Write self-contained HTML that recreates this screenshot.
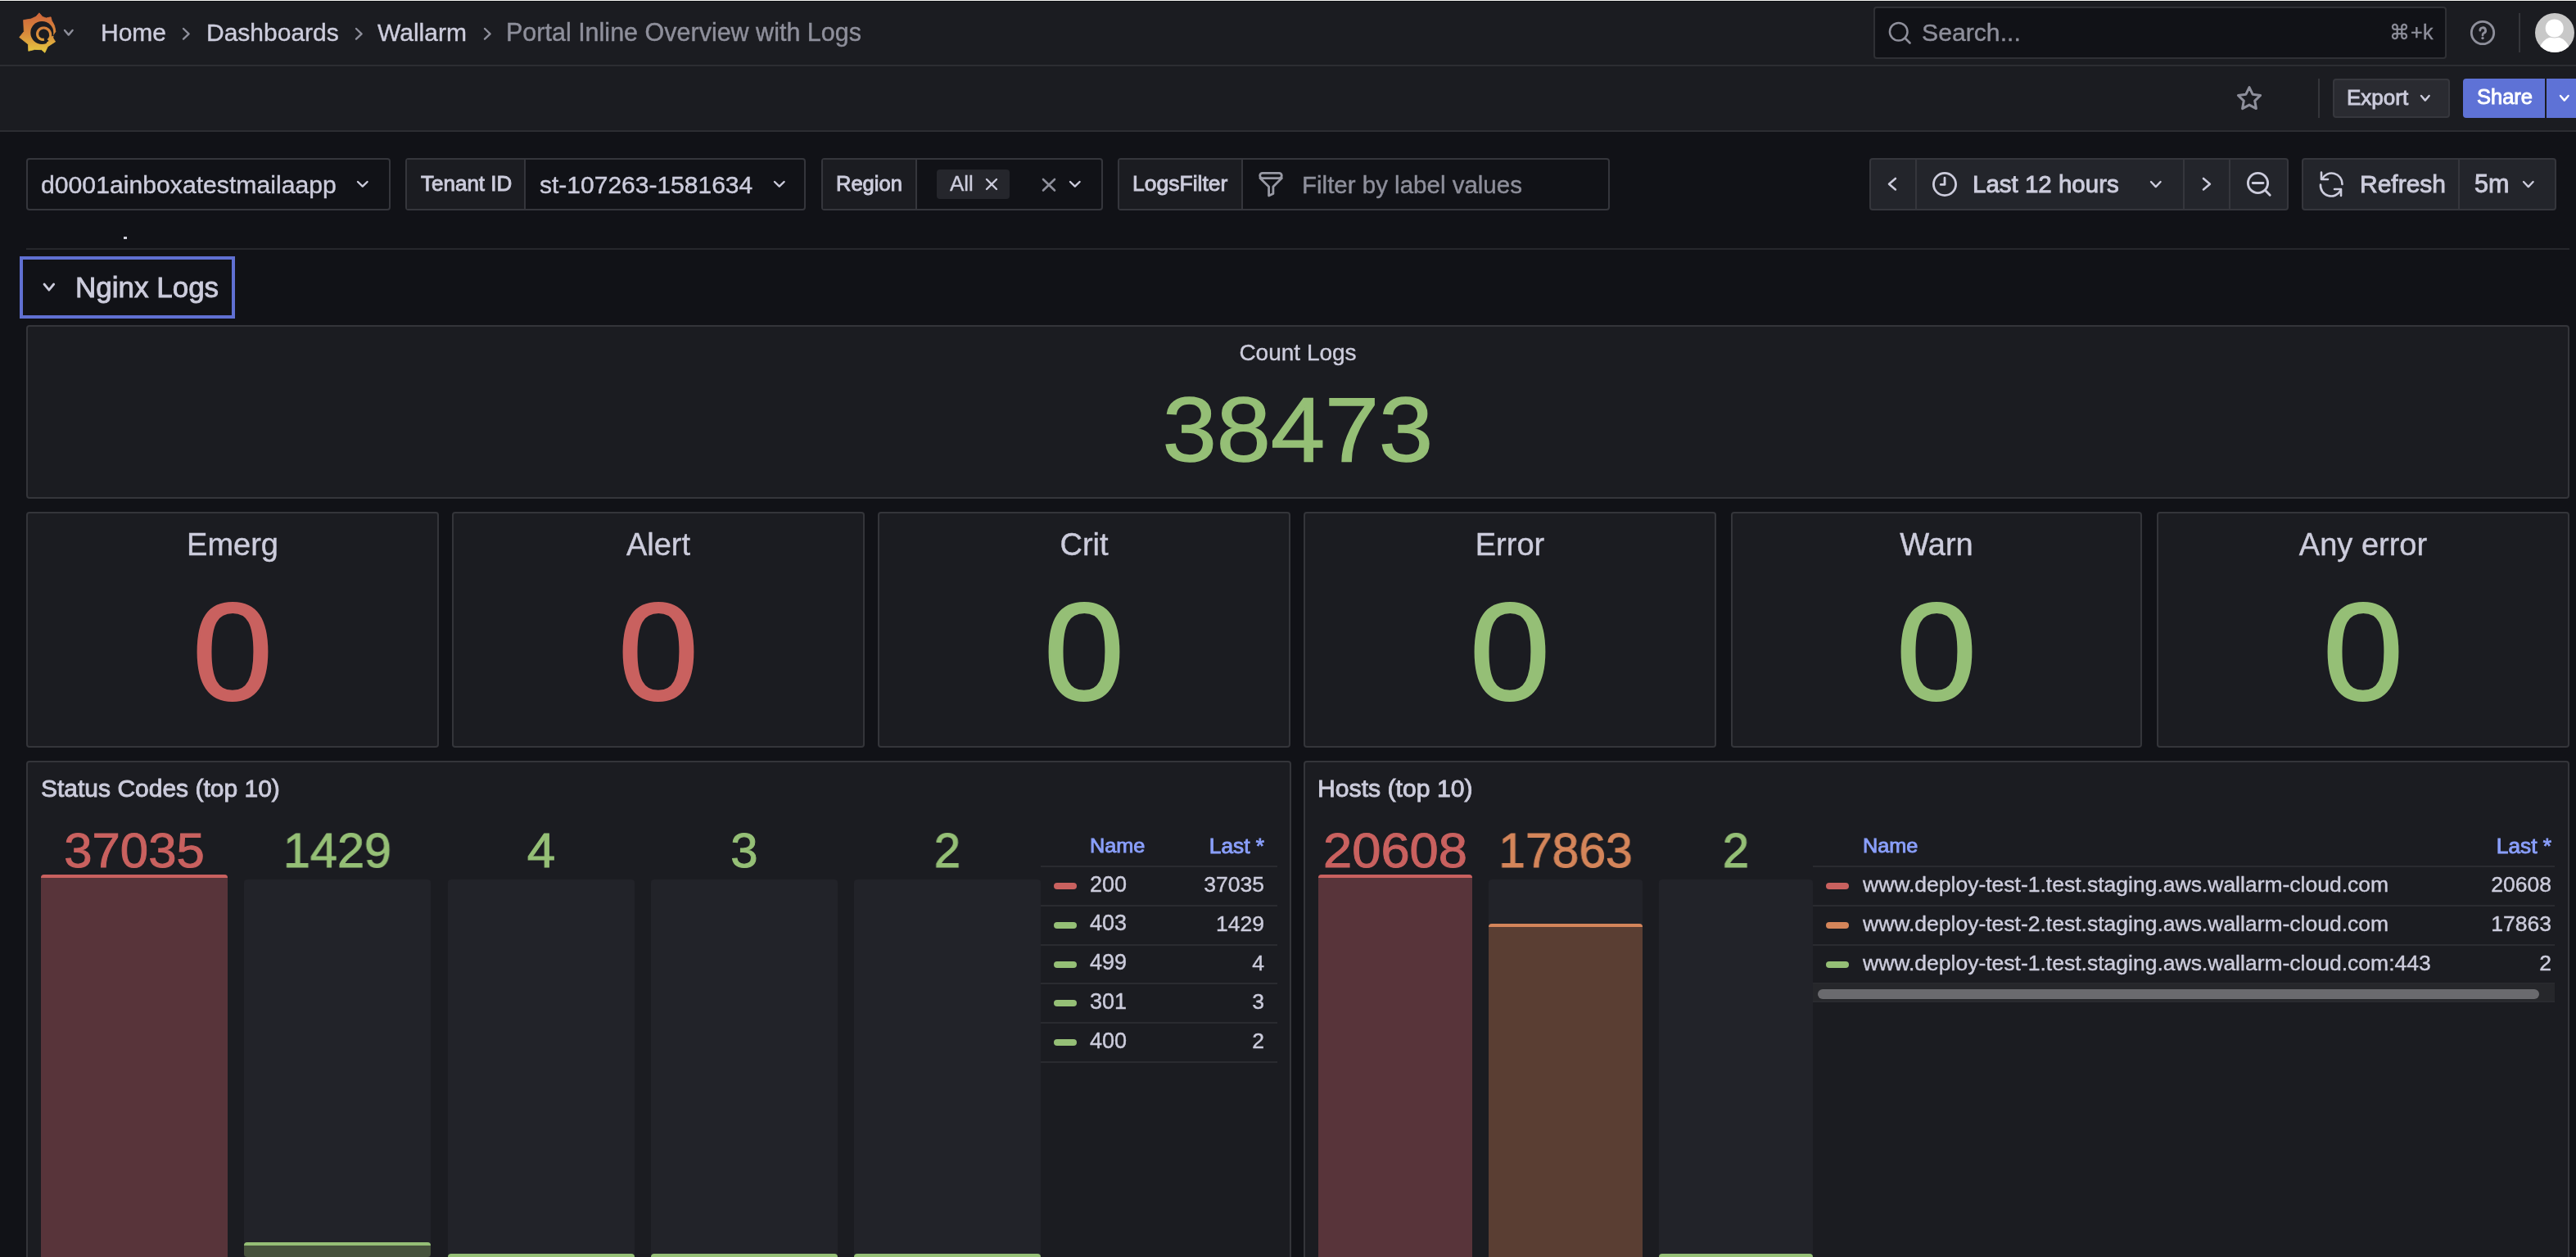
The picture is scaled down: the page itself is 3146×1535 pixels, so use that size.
<!DOCTYPE html>
<html><head><meta charset="utf-8">
<style>
*{box-sizing:border-box;margin:0;padding:0}
html,body{width:3146px;height:1535px;overflow:hidden;background:#111217;font-family:"Liberation Sans",sans-serif;color:#ccccdc}
.a{position:absolute}
.t{position:absolute;white-space:nowrap;line-height:1;will-change:transform}
svg{position:absolute;overflow:visible}
</style></head><body>
<div class="a" style="left:0px;top:0px;width:3146px;height:161px;background:#1b1c21;"></div>
<div class="a" style="left:0px;top:0px;width:3146px;height:1px;background:#f4f4f2;"></div>
<div class="a" style="left:0px;top:1px;width:3146px;height:1px;background:#0e0f13;"></div>
<div class="a" style="left:0px;top:79px;width:3146px;height:2px;background:#2c2d32;"></div>
<div class="a" style="left:0px;top:159px;width:3146px;height:2px;background:#2c2d32;"></div>
<svg style="left:14px;top:8px" width="86" height="64" viewBox="0 0 86 64"><defs><linearGradient id="lg" gradientUnits="userSpaceOnUse" x1="0" y1="10" x2="0" y2="56"><stop offset="0" stop-color="#cf683b"/><stop offset="0.5" stop-color="#d98a3b"/><stop offset="1" stop-color="#e5c840"/></linearGradient></defs><path fill="url(#lg)" stroke="url(#lg)" stroke-width="0.8" stroke-linejoin="round" d="M30.00 12.20 L33.90 7.80 L37.90 12.40 L42.30 14.00 L48.10 12.80 L49.30 17.40 Q53.40 22.50 53.90 30.60 L50.40 35.60 L51.00 38.70 L53.60 42.90 L44.30 48.90 L40.80 56.30 L36.70 52.70 L28.50 52.40 L20.80 54.30 L20.40 46.10 L9.70 37.50 L15.30 30.50 L14.60 16.60 L23.90 15.10 Z"/><circle cx="37.3" cy="32.0" r="14.0" fill="#1b1c21"/><path d="M39.88 40.11 L39.44 40.21 L38.99 40.27 L38.54 40.31 L38.08 40.31 L37.62 40.28 L37.16 40.22 L36.71 40.12 L36.26 39.99 L35.81 39.83 L35.38 39.63 L34.96 39.40 L34.56 39.14 L34.18 38.85 L33.81 38.53 L33.47 38.19 L33.15 37.81 L32.85 37.42 L32.59 37.00 L32.35 36.56 L32.15 36.10 L31.98 35.62 L31.84 35.13 L31.74 34.63 L31.67 34.12 L31.64 33.61 L31.65 33.09 L31.70 32.57 L31.78 32.05 L31.90 31.54 L32.06 31.04 L32.26 30.54 L32.49 30.06 L32.76 29.59 L33.06 29.14 L33.40 28.72 L33.77 28.31 L34.17 27.94 L34.59 27.59 L35.05 27.27 L35.53 26.98 L36.03 26.73 L36.55 26.51 L37.08 26.33 L37.63 26.19 L38.19 26.08 L38.77 26.02 L39.34 26.00 L39.92 26.02 L40.50 26.09 L41.08 26.19 L41.65 26.34 L42.21 26.53 L42.75 26.76 L43.28 27.03 L43.80 27.34 L44.29 27.69 L44.76 28.07 L45.20 28.49 L45.61 28.94 L45.99 29.42 L46.33 29.93 L46.64 30.47 L46.91 31.03 L47.14 31.61 L47.33 32.21 L47.47 32.82 L47.57 33.44 L47.63 34.08 L47.64 34.72 L47.60 35.35 L47.52 35.99 L47.39 36.63 L47.22 37.25 L47.00 37.87 L46.73 38.46 L46.42 39.04 L46.07 39.60 L45.68 40.14 L45.24 40.64 L44.77 41.12" fill="none" stroke="url(#lg)" stroke-width="3.2"/><path fill="url(#lg)" d="M48.43 36.58 L48.21 37.42 L47.92 38.25 L47.55 39.05 L47.12 39.82 L46.61 40.56 L46.05 41.25 L45.42 41.89 L44.73 42.47 L43.99 43.00 L43.21 43.46 L42.36 45.91 L43.67 45.36 L44.92 44.69 L46.10 43.90 L47.20 43.00 L48.21 42.00 L49.12 40.91 L49.92 39.73 L50.60 38.49 L51.16 37.18 L51.60 35.83 Z"/></svg>
<svg style="left:73.2px;top:31.200000000000003px" width="21.599999999999994" height="17.599999999999994" viewBox="0 0 21.599999999999994 17.599999999999994"><path d="M6.00 6.00 L10.80 11.60 L15.60 6.00" fill="none" stroke="#8e8f9b" stroke-width="2.4" stroke-linecap="round" stroke-linejoin="round"/></svg>
<div class="t" style="top:24.61px;font-size:30px;color:#ccccdc;-webkit-text-stroke:0.4px #ccccdc;left:123px;">Home</div>
<svg style="left:218.2px;top:29.200000000000003px" width="18.600000000000023" height="24.599999999999994" viewBox="0 0 18.600000000000023 24.599999999999994"><path d="M6.00 6.00 L12.60 12.30 L6.00 18.60" fill="none" stroke="#8e8f9b" stroke-width="2.4" stroke-linecap="round" stroke-linejoin="round"/></svg>
<div class="t" style="top:24.61px;font-size:30px;color:#ccccdc;-webkit-text-stroke:0.4px #ccccdc;left:252px;">Dashboards</div>
<svg style="left:429.2px;top:29.200000000000003px" width="18.600000000000023" height="24.599999999999994" viewBox="0 0 18.600000000000023 24.599999999999994"><path d="M6.00 6.00 L12.60 12.30 L6.00 18.60" fill="none" stroke="#8e8f9b" stroke-width="2.4" stroke-linecap="round" stroke-linejoin="round"/></svg>
<div class="t" style="top:24.61px;font-size:30px;color:#ccccdc;-webkit-text-stroke:0.4px #ccccdc;left:461px;">Wallarm</div>
<svg style="left:586.2px;top:29.200000000000003px" width="18.59999999999991" height="24.599999999999994" viewBox="0 0 18.59999999999991 24.599999999999994"><path d="M6.00 6.00 L12.60 12.30 L6.00 18.60" fill="none" stroke="#8e8f9b" stroke-width="2.4" stroke-linecap="round" stroke-linejoin="round"/></svg>
<div class="t" style="top:24.18px;font-size:30.5px;color:#8e8f9b;-webkit-text-stroke:0.4px #8e8f9b;left:618px;">Portal Inline Overview with Logs</div>
<div class="a" style="left:2288px;top:8px;width:700px;height:64px;background:#111217;border:2px solid #2f3035;border-radius:4px;"></div>
<svg style="left:2304px;top:24px" width="34" height="34" viewBox="0 0 34 34"><circle cx="14.7" cy="14.8" r="10.8" fill="none" stroke="#8e8f9b" stroke-width="2.5"/><path d="M22.5 22.5 L28.5 28.5" fill="none" stroke="#8e8f9b" stroke-width="2.6" stroke-linecap="round" stroke-linejoin="round"/></svg>
<div class="t" style="top:24.74px;font-size:30.2px;color:#8e8f9b;-webkit-text-stroke:0.4px #8e8f9b;left:2346.5px;">Search...</div>
<div class="t" style="top:26.84px;font-size:25px;color:#8e8f9b;letter-spacing:0.5px;-webkit-text-stroke:0.4px #8e8f9b;left:972px;width:2000px;text-align:right;">&#8984;+k</div>
<svg style="left:3014px;top:22px" width="36" height="36" viewBox="0 0 36 36"><circle cx="18" cy="18" r="13.7" fill="none" stroke="#8e8f9b" stroke-width="2.8"/><path d="M14.8 15.2 A3.4 3.4 0 1 1 19.2 18.4 Q18 19 18 21" fill="none" stroke="#8e8f9b" stroke-width="2.8" stroke-linecap="round" stroke-linejoin="round"/><circle cx="18" cy="24.6" r="1.7" fill="#8e8f9b"/></svg>
<div class="a" style="left:3076px;top:16px;width:2px;height:48px;background:#34353a;"></div>
<svg style="left:3096px;top:16px" width="48" height="48" viewBox="0 0 48 48"><circle cx="24" cy="24" r="24" fill="#c8c8c8"/>
<clipPath id="av"><circle cx="24" cy="24" r="24"/></clipPath><g clip-path="url(#av)"><ellipse cx="23.7" cy="46.5" rx="18.5" ry="17.5" fill="#ffffff"/><circle cx="23.7" cy="18.4" r="12.2" fill="#c8c8c8"/><circle cx="23.7" cy="18.4" r="11" fill="#ffffff"/></g></svg>
<svg style="left:2728px;top:102px" width="38" height="36" viewBox="0 0 38 36"><path d="M19 4.6 L23.1 13.2 L32.6 14.5 L25.7 21.1 L27.4 30.6 L19 26.1 L10.6 30.6 L12.3 21.1 L5.4 14.5 L14.9 13.2 Z" fill="none" stroke="#8e8f9b" stroke-width="3.0" stroke-linecap="round" stroke-linejoin="round"/></svg>
<div class="a" style="left:2831px;top:96px;width:2px;height:48px;background:#34353a;"></div>
<div class="a" style="left:2849px;top:96px;width:143px;height:48px;background:#2a2b31;border:2px solid #36373d;border-radius:4px;"></div>
<div class="t" style="top:105.99px;font-size:26px;color:#ccccdc;-webkit-text-stroke:0.9px #ccccdc;left:2866px;">Export</div>
<svg style="left:2951.2px;top:111.2px" width="21.600000000000364" height="17.599999999999994" viewBox="0 0 21.600000000000364 17.599999999999994"><path d="M6.00 6.00 L10.80 11.60 L15.60 6.00" fill="none" stroke="#ccccdc" stroke-width="2.4" stroke-linecap="round" stroke-linejoin="round"/></svg>
<div class="a" style="left:3008px;top:96px;width:100px;height:48px;background:#5e72d6;border-radius:4px 0 0 4px"></div>
<div class="t" style="top:106.41px;font-size:25.5px;color:#ffffff;-webkit-text-stroke:0.9px #ffffff;left:3024.5px;">Share</div>
<div class="a" style="left:3110px;top:96px;width:40px;height:48px;background:#5e72d6;"></div>
<svg style="left:3121.2px;top:111.2px" width="21.600000000000364" height="17.599999999999994" viewBox="0 0 21.600000000000364 17.599999999999994"><path d="M6.00 6.00 L10.80 11.60 L15.60 6.00" fill="none" stroke="#ffffff" stroke-width="2.4" stroke-linecap="round" stroke-linejoin="round"/></svg>
<div class="a" style="left:32px;top:193px;width:445px;height:64px;background:#111217;border:2px solid #35363c;border-radius:4px;"></div>
<div class="t" style="top:210.74px;font-size:30.2px;color:#ccccdc;-webkit-text-stroke:0.4px #ccccdc;left:50px;">d0001ainboxatestmailaapp</div>
<svg style="left:431.2px;top:216.2px" width="23.600000000000023" height="17.600000000000023" viewBox="0 0 23.600000000000023 17.600000000000023"><path d="M6.00 6.00 L11.80 11.60 L17.60 6.00" fill="none" stroke="#ccccdc" stroke-width="2.4" stroke-linecap="round" stroke-linejoin="round"/></svg>
<div class="a" style="left:495px;top:193px;width:489px;height:64px;background:#111217;border:2px solid #35363c;border-radius:4px;"></div>
<div class="a" style="left:497px;top:195px;width:143px;height:60px;background:#1b1c21;"></div>
<div class="a" style="left:640px;top:195px;width:2px;height:60px;background:#35363c;"></div>
<div class="t" style="top:211.49px;font-size:26px;color:#ccccdc;-webkit-text-stroke:0.9px #ccccdc;left:514px;">Tenant ID</div>
<div class="t" style="top:210.91px;font-size:30px;color:#ccccdc;-webkit-text-stroke:0.4px #ccccdc;left:659px;">st-107263-1581634</div>
<svg style="left:939.7px;top:216.2px" width="23.59999999999991" height="17.600000000000023" viewBox="0 0 23.59999999999991 17.600000000000023"><path d="M6.00 6.00 L11.80 11.60 L17.60 6.00" fill="none" stroke="#ccccdc" stroke-width="2.4" stroke-linecap="round" stroke-linejoin="round"/></svg>
<div class="a" style="left:1003px;top:193px;width:344px;height:64px;background:#111217;border:2px solid #35363c;border-radius:4px;"></div>
<div class="a" style="left:1005px;top:195px;width:113px;height:60px;background:#1b1c21;"></div>
<div class="a" style="left:1118px;top:195px;width:2px;height:60px;background:#35363c;"></div>
<div class="t" style="top:211.91px;font-size:25.5px;color:#ccccdc;-webkit-text-stroke:0.9px #ccccdc;left:1020.5px;">Region</div>
<div class="a" style="left:1144px;top:207px;width:89px;height:36px;background:#25262c;border-radius:4px;"></div>
<div class="t" style="top:211.49px;font-size:26px;color:#ccccdc;-webkit-text-stroke:0.3px #ccccdc;left:1160px;">All</div>
<svg style="left:1199px;top:213px" width="24" height="24" viewBox="0 0 24 24"><path d="M6.00 6.00 L18.00 18.00" fill="none" stroke="#ccccdc" stroke-width="2.4" stroke-linecap="round" stroke-linejoin="round"/><path d="M18.00 6.00 L6.00 18.00" fill="none" stroke="#ccccdc" stroke-width="2.4" stroke-linecap="round" stroke-linejoin="round"/></svg>
<svg style="left:1268px;top:212.5px" width="26" height="25.5" viewBox="0 0 26 25.5"><path d="M6.00 6.00 L20.00 19.50" fill="none" stroke="#8e8f9b" stroke-width="2.6" stroke-linecap="round" stroke-linejoin="round"/><path d="M20.00 6.00 L6.00 19.50" fill="none" stroke="#8e8f9b" stroke-width="2.6" stroke-linecap="round" stroke-linejoin="round"/></svg>
<svg style="left:1301.2px;top:216.2px" width="23.59999999999991" height="17.600000000000023" viewBox="0 0 23.59999999999991 17.600000000000023"><path d="M6.00 6.00 L11.80 11.60 L17.60 6.00" fill="none" stroke="#ccccdc" stroke-width="2.4" stroke-linecap="round" stroke-linejoin="round"/></svg>
<div class="a" style="left:1365px;top:193px;width:601px;height:64px;background:#111217;border:2px solid #35363c;border-radius:4px;"></div>
<div class="a" style="left:1367px;top:195px;width:149px;height:60px;background:#1b1c21;"></div>
<div class="a" style="left:1516px;top:195px;width:2px;height:60px;background:#35363c;"></div>
<div class="t" style="top:211.07px;font-size:26.5px;color:#ccccdc;-webkit-text-stroke:0.9px #ccccdc;left:1383px;">LogsFilter</div>
<svg style="left:1530px;top:204px" width="44" height="44" viewBox="0 0 44 44"><rect x="8.7" y="7.4" width="26.6" height="6.2" rx="3.1" fill="none" stroke="#9899a4" stroke-width="2.8"/><path d="M8.9 13.6 L19.6 24 L19.6 35 L24.9 32.4 L24.9 24 L35.4 13.6" fill="none" stroke="#9899a4" stroke-width="2.8" stroke-linecap="round" stroke-linejoin="round"/></svg>
<div class="t" style="top:211.33px;font-size:29.5px;color:#8e8f9b;-webkit-text-stroke:0.4px #8e8f9b;left:1590px;">Filter by label values</div>
<div class="a" style="left:2283px;top:193px;width:512px;height:64px;background:#23252b;border:2px solid #35363c;border-radius:4px;"></div>
<div class="a" style="left:2339px;top:195px;width:2px;height:60px;background:#35363c;"></div>
<div class="a" style="left:2666px;top:195px;width:2px;height:60px;background:#35363c;"></div>
<div class="a" style="left:2722px;top:195px;width:2px;height:60px;background:#35363c;"></div>
<svg style="left:2301.3px;top:212.3px" width="19.899999999999636" height="25.399999999999977" viewBox="0 0 19.899999999999636 25.399999999999977"><path d="M13.90 6.00 L6.00 12.70 L13.90 19.40" fill="none" stroke="#ccccdc" stroke-width="2.6" stroke-linecap="round" stroke-linejoin="round"/></svg>
<svg style="left:2357px;top:207px" width="36" height="36" viewBox="0 0 36 36"><circle cx="18" cy="18" r="13.6" fill="none" stroke="#ccccdc" stroke-width="2.8"/><path d="M18 10.2 L18 18.4 L13.2 18.4" fill="none" stroke="#ccccdc" stroke-width="2.8" stroke-linecap="round" stroke-linejoin="round"/></svg>
<div class="t" style="top:209.83px;font-size:29.5px;color:#ccccdc;-webkit-text-stroke:0.9px #ccccdc;left:2409px;">Last 12 hours</div>
<svg style="left:2621.2px;top:216.2px" width="23.600000000000364" height="18.100000000000023" viewBox="0 0 23.600000000000364 18.100000000000023"><path d="M6.00 6.00 L11.80 12.10 L17.60 6.00" fill="none" stroke="#ccccdc" stroke-width="2.4" stroke-linecap="round" stroke-linejoin="round"/></svg>
<svg style="left:2685.3px;top:212.3px" width="19.899999999999636" height="25.399999999999977" viewBox="0 0 19.899999999999636 25.399999999999977"><path d="M6.00 6.00 L13.90 12.70 L6.00 19.40" fill="none" stroke="#ccccdc" stroke-width="2.6" stroke-linecap="round" stroke-linejoin="round"/></svg>
<svg style="left:2741px;top:206px" width="36" height="36" viewBox="0 0 36 36"><circle cx="16.5" cy="17.5" r="12.1" fill="none" stroke="#ccccdc" stroke-width="2.9"/><path d="M10.2 17.5 L23 17.5 M25.3 26.3 L31.2 32.2" fill="none" stroke="#ccccdc" stroke-width="2.9" stroke-linecap="round" stroke-linejoin="round"/></svg>
<div class="a" style="left:2811px;top:193px;width:311px;height:64px;background:#23252b;border:2px solid #35363c;border-radius:4px;"></div>
<div class="a" style="left:3002px;top:195px;width:2px;height:60px;background:#35363c;"></div>
<svg style="left:2829px;top:207px" width="36" height="36" viewBox="0 0 36 36"><path d="M31.5 18 A13 13 0 0 0 7 11.5" fill="none" stroke="#ccccdc" stroke-width="2.6" stroke-linecap="round" stroke-linejoin="round"/><path d="M5 18.5 A13 13 0 0 0 29.5 25.5" fill="none" stroke="#ccccdc" stroke-width="2.6" stroke-linecap="round" stroke-linejoin="round"/><path d="M6 3.5 L6 12 L14 12" fill="none" stroke="#ccccdc" stroke-width="2.6" stroke-linecap="round" stroke-linejoin="round"/><path d="M30 32 L30 24 L22 24" fill="none" stroke="#ccccdc" stroke-width="2.6" stroke-linecap="round" stroke-linejoin="round"/></svg>
<div class="t" style="top:209.60px;font-size:30px;color:#ccccdc;-webkit-text-stroke:0.9px #ccccdc;left:2882px;">Refresh</div>
<div class="t" style="top:209.18px;font-size:30.5px;color:#ccccdc;-webkit-text-stroke:0.9px #ccccdc;left:3022px;">5m</div>
<svg style="left:3076.2px;top:216.2px" width="23.600000000000364" height="18.100000000000023" viewBox="0 0 23.600000000000364 18.100000000000023"><path d="M6.00 6.00 L11.80 12.10 L17.60 6.00" fill="none" stroke="#ccccdc" stroke-width="2.4" stroke-linecap="round" stroke-linejoin="round"/></svg>
<div class="a" style="left:151px;top:289px;width:4px;height:3px;background:#d0d0da;"></div>
<div class="a" style="left:32px;top:303px;width:3106px;height:2px;background:#26272c;"></div>
<div class="a" style="left:24px;top:313px;width:263px;height:76px;border:4px solid #6070d2;"></div>
<svg style="left:48.4px;top:341.4px" width="23.699999999999996" height="19.200000000000045" viewBox="0 0 23.699999999999996 19.200000000000045"><path d="M6.00 6.00 L11.85 13.20 L17.70 6.00" fill="none" stroke="#ccccdc" stroke-width="2.8" stroke-linecap="round" stroke-linejoin="round"/></svg>
<div class="t" style="top:333.07px;font-size:35px;color:#ccccdc;-webkit-text-stroke:0.9px #ccccdc;left:91.5px;">Nginx Logs</div>
<div class="a" style="left:32px;top:397px;width:3106px;height:212px;background:#1b1c21;border:2px solid #34353a;border-radius:4px;"></div>
<div class="t" style="top:417.30px;font-size:28px;color:#ccccdc;-webkit-text-stroke:0.4px #ccccdc;left:585px;width:2000px;text-align:center;">Count Logs</div>
<div class="t" style="top:468.69px;font-size:112px;color:#95bf76;-webkit-text-stroke:1.5px #95bf76;left:585px;width:2000px;text-align:center;transform:scaleX(1.061);transform-origin:center 0;">38473</div>
<div class="a" style="left:32px;top:625px;width:504px;height:288px;background:#1b1c21;border:2px solid #34353a;border-radius:4px;"></div>
<div class="t" style="top:645.83px;font-size:38px;color:#ccccdc;-webkit-text-stroke:0.4px #ccccdc;left:-716.0px;width:2000px;text-align:center;">Emerg</div>
<div class="t" style="top:711.79px;font-size:168px;color:#c9615f;-webkit-text-stroke:2px #c9615f;left:-716.0px;width:2000px;text-align:center;transform:scaleX(1.054);transform-origin:center 0;">0</div>
<div class="a" style="left:552px;top:625px;width:504px;height:288px;background:#1b1c21;border:2px solid #34353a;border-radius:4px;"></div>
<div class="t" style="top:645.83px;font-size:38px;color:#ccccdc;-webkit-text-stroke:0.4px #ccccdc;left:-196.0px;width:2000px;text-align:center;">Alert</div>
<div class="t" style="top:711.79px;font-size:168px;color:#c9615f;-webkit-text-stroke:2px #c9615f;left:-196.0px;width:2000px;text-align:center;transform:scaleX(1.054);transform-origin:center 0;">0</div>
<div class="a" style="left:1072px;top:625px;width:504px;height:288px;background:#1b1c21;border:2px solid #34353a;border-radius:4px;"></div>
<div class="t" style="top:645.83px;font-size:38px;color:#ccccdc;-webkit-text-stroke:0.4px #ccccdc;left:324.0px;width:2000px;text-align:center;">Crit</div>
<div class="t" style="top:711.79px;font-size:168px;color:#95bf76;-webkit-text-stroke:2px #95bf76;left:324.0px;width:2000px;text-align:center;transform:scaleX(1.054);transform-origin:center 0;">0</div>
<div class="a" style="left:1592px;top:625px;width:504px;height:288px;background:#1b1c21;border:2px solid #34353a;border-radius:4px;"></div>
<div class="t" style="top:645.83px;font-size:38px;color:#ccccdc;-webkit-text-stroke:0.4px #ccccdc;left:844.0px;width:2000px;text-align:center;">Error</div>
<div class="t" style="top:711.79px;font-size:168px;color:#95bf76;-webkit-text-stroke:2px #95bf76;left:844.0px;width:2000px;text-align:center;transform:scaleX(1.054);transform-origin:center 0;">0</div>
<div class="a" style="left:2114px;top:625px;width:502px;height:288px;background:#1b1c21;border:2px solid #34353a;border-radius:4px;"></div>
<div class="t" style="top:645.83px;font-size:38px;color:#ccccdc;-webkit-text-stroke:0.4px #ccccdc;left:1365.0px;width:2000px;text-align:center;">Warn</div>
<div class="t" style="top:711.79px;font-size:168px;color:#95bf76;-webkit-text-stroke:2px #95bf76;left:1365.0px;width:2000px;text-align:center;transform:scaleX(1.054);transform-origin:center 0;">0</div>
<div class="a" style="left:2634px;top:625px;width:504px;height:288px;background:#1b1c21;border:2px solid #34353a;border-radius:4px;"></div>
<div class="t" style="top:645.83px;font-size:38px;color:#ccccdc;-webkit-text-stroke:0.4px #ccccdc;left:1886.0px;width:2000px;text-align:center;">Any error</div>
<div class="t" style="top:711.79px;font-size:168px;color:#95bf76;-webkit-text-stroke:2px #95bf76;left:1886.0px;width:2000px;text-align:center;transform:scaleX(1.054);transform-origin:center 0;">0</div>
<div class="a" style="left:32px;top:929px;width:1545px;height:640px;background:#1b1c21;border:2px solid #34353a;border-radius:4px;"></div>
<div class="t" style="top:948.11px;font-size:30px;color:#ccccdc;-webkit-text-stroke:0.9px #ccccdc;left:50px;">Status Codes (top 10)</div>
<div class="a" style="left:50.0px;top:1074px;width:228px;height:520px;background:#222329;border-radius:4px;"></div>
<div class="t" style="top:1008.71px;font-size:60px;color:#c9615f;-webkit-text-stroke:1px #c9615f;left:-836.0px;width:2000px;text-align:center;transform:scaleX(1.028);transform-origin:center 0;">37035</div>
<div class="a" style="left:298.3px;top:1074px;width:228px;height:520px;background:#222329;border-radius:4px;"></div>
<div class="t" style="top:1008.71px;font-size:60px;color:#95bf76;-webkit-text-stroke:1px #95bf76;left:-587.7px;width:2000px;text-align:center;transform:scaleX(0.99);transform-origin:center 0;">1429</div>
<div class="a" style="left:546.6px;top:1074px;width:228px;height:520px;background:#222329;border-radius:4px;"></div>
<div class="t" style="top:1008.71px;font-size:60px;color:#95bf76;-webkit-text-stroke:1px #95bf76;left:-339.4px;width:2000px;text-align:center;transform:scaleX(1.03);transform-origin:center 0;">4</div>
<div class="a" style="left:794.9000000000001px;top:1074px;width:228px;height:520px;background:#222329;border-radius:4px;"></div>
<div class="t" style="top:1008.71px;font-size:60px;color:#95bf76;-webkit-text-stroke:1px #95bf76;left:-91.09999999999991px;width:2000px;text-align:center;">3</div>
<div class="a" style="left:1043.2px;top:1074px;width:228px;height:520px;background:#222329;border-radius:4px;"></div>
<div class="t" style="top:1008.71px;font-size:60px;color:#95bf76;-webkit-text-stroke:1px #95bf76;left:157.20000000000005px;width:2000px;text-align:center;transform:scaleX(0.97);transform-origin:center 0;">2</div>
<div class="a" style="left:50px;top:1068px;width:228px;height:520px;background:#58343a;border-radius:4px;"></div>
<div class="a" style="left:50px;top:1068px;width:228px;height:4px;background:#c9615f;border-radius:4px 4px 0 0"></div>
<div class="a" style="left:298px;top:1517px;width:228px;height:18px;background:#46523c;border-radius:4px 4px 4px 4px"></div>
<div class="a" style="left:298px;top:1517px;width:228px;height:4px;background:#95bf76;border-radius:4px 4px 0 0"></div>
<div class="a" style="left:546.6px;top:1531px;width:228px;height:4px;background:#95bf76;border-radius:4px 4px 0 0"></div>
<div class="a" style="left:794.9000000000001px;top:1531px;width:228px;height:4px;background:#95bf76;border-radius:4px 4px 0 0"></div>
<div class="a" style="left:1043.2px;top:1531px;width:228px;height:4px;background:#95bf76;border-radius:4px 4px 0 0"></div>
<div class="t" style="top:1021.26px;font-size:24.5px;color:#8a9ffb;-webkit-text-stroke:0.9px #8a9ffb;left:1331px;transform:scaleX(1.03);transform-origin:left 0;">Name</div>
<div class="t" style="top:1020.84px;font-size:25px;color:#8a9ffb;-webkit-text-stroke:0.9px #8a9ffb;left:-456.5px;width:2000px;text-align:right;transform:scaleX(1.05);transform-origin:right 0;">Last *</div>
<div class="a" style="left:1271px;top:1057px;width:289px;height:2px;background:#2a2b30;"></div>
<div class="a" style="left:1287px;top:1078.0px;width:28px;height:8px;background:#c9615f;border-radius:4px;"></div>
<div class="t" style="top:1066.64px;font-size:27px;color:#ccccdc;-webkit-text-stroke:0.4px #ccccdc;left:1331px;">200</div>
<div class="t" style="top:1067.07px;font-size:26.5px;color:#ccccdc;-webkit-text-stroke:0.4px #ccccdc;left:-456.5px;width:2000px;text-align:right;">37035</div>
<div class="a" style="left:1271px;top:1104.8px;width:289px;height:2px;background:#2a2b30;"></div>
<div class="a" style="left:1287px;top:1125.8px;width:28px;height:8px;background:#95bf76;border-radius:4px;"></div>
<div class="t" style="top:1114.44px;font-size:27px;color:#ccccdc;-webkit-text-stroke:0.4px #ccccdc;left:1331px;">403</div>
<div class="t" style="top:1114.87px;font-size:26.5px;color:#ccccdc;-webkit-text-stroke:0.4px #ccccdc;left:-456.5px;width:2000px;text-align:right;">1429</div>
<div class="a" style="left:1271px;top:1152.6px;width:289px;height:2px;background:#2a2b30;"></div>
<div class="a" style="left:1287px;top:1173.6px;width:28px;height:8px;background:#95bf76;border-radius:4px;"></div>
<div class="t" style="top:1162.24px;font-size:27px;color:#ccccdc;-webkit-text-stroke:0.4px #ccccdc;left:1331px;">499</div>
<div class="t" style="top:1162.67px;font-size:26.5px;color:#ccccdc;-webkit-text-stroke:0.4px #ccccdc;left:-456.5px;width:2000px;text-align:right;">4</div>
<div class="a" style="left:1271px;top:1200.3999999999999px;width:289px;height:2px;background:#2a2b30;"></div>
<div class="a" style="left:1287px;top:1221.4px;width:28px;height:8px;background:#95bf76;border-radius:4px;"></div>
<div class="t" style="top:1210.04px;font-size:27px;color:#ccccdc;-webkit-text-stroke:0.4px #ccccdc;left:1331px;">301</div>
<div class="t" style="top:1210.47px;font-size:26.5px;color:#ccccdc;-webkit-text-stroke:0.4px #ccccdc;left:-456.5px;width:2000px;text-align:right;">3</div>
<div class="a" style="left:1271px;top:1248.2px;width:289px;height:2px;background:#2a2b30;"></div>
<div class="a" style="left:1287px;top:1269.2px;width:28px;height:8px;background:#95bf76;border-radius:4px;"></div>
<div class="t" style="top:1257.84px;font-size:27px;color:#ccccdc;-webkit-text-stroke:0.4px #ccccdc;left:1331px;">400</div>
<div class="t" style="top:1258.27px;font-size:26.5px;color:#ccccdc;-webkit-text-stroke:0.4px #ccccdc;left:-456.5px;width:2000px;text-align:right;">2</div>
<div class="a" style="left:1271px;top:1296.0px;width:289px;height:2px;background:#2a2b30;"></div>
<div class="a" style="left:1592px;top:929px;width:1546px;height:640px;background:#1b1c21;border:2px solid #34353a;border-radius:4px;"></div>
<div class="t" style="top:947.94px;font-size:30.2px;color:#ccccdc;-webkit-text-stroke:0.9px #ccccdc;left:1609px;">Hosts (top 10)</div>
<div class="a" style="left:1610px;top:1074px;width:188px;height:520px;background:#222329;border-radius:4px;"></div>
<div class="t" style="top:1008.71px;font-size:60px;color:#c9615f;-webkit-text-stroke:1px #c9615f;left:704px;width:2000px;text-align:center;transform:scaleX(1.055);transform-origin:center 0;">20608</div>
<div class="a" style="left:1818px;top:1074px;width:188px;height:520px;background:#222329;border-radius:4px;"></div>
<div class="t" style="top:1008.71px;font-size:60px;color:#d4855a;-webkit-text-stroke:1px #d4855a;left:912px;width:2000px;text-align:center;transform:scaleX(0.98);transform-origin:center 0;">17863</div>
<div class="a" style="left:2026px;top:1074px;width:188px;height:520px;background:#222329;border-radius:4px;"></div>
<div class="t" style="top:1008.71px;font-size:60px;color:#95bf76;-webkit-text-stroke:1px #95bf76;left:1120px;width:2000px;text-align:center;transform:scaleX(0.97);transform-origin:center 0;">2</div>
<div class="a" style="left:1610px;top:1068px;width:188px;height:520px;background:#58343a;border-radius:4px;"></div>
<div class="a" style="left:1610px;top:1068px;width:188px;height:4px;background:#c9615f;border-radius:4px 4px 0 0"></div>
<div class="a" style="left:1818px;top:1128px;width:188px;height:520px;background:#5a3e33;border-radius:4px;"></div>
<div class="a" style="left:1818px;top:1128px;width:188px;height:4px;background:#d4855a;border-radius:4px 4px 0 0"></div>
<div class="a" style="left:2026px;top:1531px;width:188px;height:4px;background:#95bf76;border-radius:4px 4px 0 0"></div>
<div class="a" style="left:2214px;top:1010px;width:906px;height:600px;background:#1b1c21;"></div>
<div class="t" style="top:1021.26px;font-size:24.5px;color:#8a9ffb;-webkit-text-stroke:0.9px #8a9ffb;left:2274.5px;transform:scaleX(1.03);transform-origin:left 0;">Name</div>
<div class="t" style="top:1020.84px;font-size:25px;color:#8a9ffb;-webkit-text-stroke:0.9px #8a9ffb;left:1115.5px;width:2000px;text-align:right;transform:scaleX(1.05);transform-origin:right 0;">Last *</div>
<div class="a" style="left:2214px;top:1057px;width:906px;height:2px;background:#2a2b30;"></div>
<div class="a" style="left:2230px;top:1078.0px;width:28px;height:8px;background:#c9615f;border-radius:4px;"></div>
<div class="t" style="top:1067.07px;font-size:26.5px;color:#ccccdc;-webkit-text-stroke:0.4px #ccccdc;left:2274.5px;">www.deploy-test-1.test.staging.aws.wallarm-cloud.com</div>
<div class="t" style="top:1067.07px;font-size:26.5px;color:#ccccdc;-webkit-text-stroke:0.4px #ccccdc;left:1115.5px;width:2000px;text-align:right;">20608</div>
<div class="a" style="left:2214px;top:1104.8px;width:906px;height:2px;background:#2a2b30;"></div>
<div class="a" style="left:2230px;top:1125.8px;width:28px;height:8px;background:#d4855a;border-radius:4px;"></div>
<div class="t" style="top:1114.87px;font-size:26.5px;color:#ccccdc;-webkit-text-stroke:0.4px #ccccdc;left:2274.5px;">www.deploy-test-2.test.staging.aws.wallarm-cloud.com</div>
<div class="t" style="top:1114.87px;font-size:26.5px;color:#ccccdc;-webkit-text-stroke:0.4px #ccccdc;left:1115.5px;width:2000px;text-align:right;">17863</div>
<div class="a" style="left:2214px;top:1152.6px;width:906px;height:2px;background:#2a2b30;"></div>
<div class="a" style="left:2230px;top:1173.6px;width:28px;height:8px;background:#95bf76;border-radius:4px;"></div>
<div class="t" style="top:1162.67px;font-size:26.5px;color:#ccccdc;-webkit-text-stroke:0.4px #ccccdc;left:2274.5px;">www.deploy-test-1.test.staging.aws.wallarm-cloud.com:443</div>
<div class="t" style="top:1162.67px;font-size:26.5px;color:#ccccdc;-webkit-text-stroke:0.4px #ccccdc;left:1115.5px;width:2000px;text-align:right;">2</div>
<div class="a" style="left:2214px;top:1200.3999999999999px;width:906px;height:2px;background:#2a2b30;"></div>
<div class="a" style="left:2214px;top:1201px;width:906px;height:22px;background:#26272b;"></div>
<div class="a" style="left:2220px;top:1208px;width:881px;height:12px;background:#6a6a6e;border-radius:6px;"></div>
<div class="a" style="left:2214px;top:1222px;width:906px;height:2px;background:#2a2b30;"></div>
</body></html>
